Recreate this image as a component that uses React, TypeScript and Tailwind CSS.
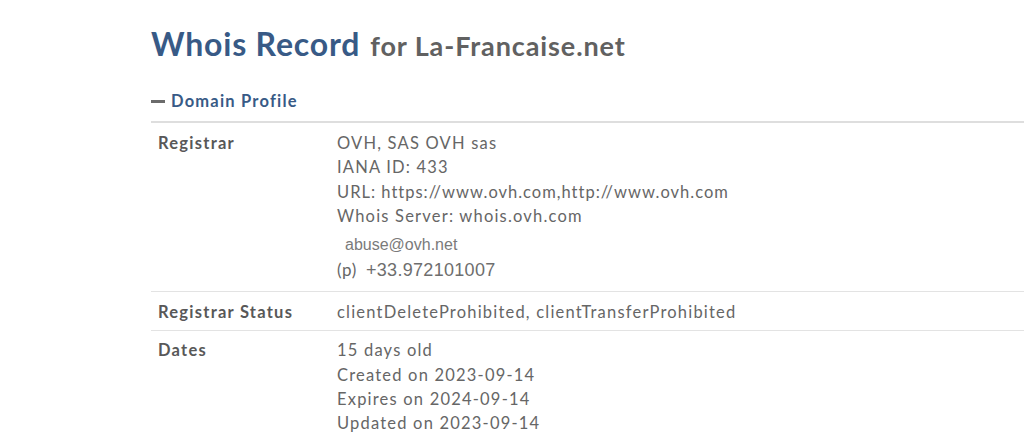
export default function App() {
  const lato = "font-['Lato','Liberation_Sans',sans-serif]";
  const arial = "font-['Liberation_Sans',Arial,sans-serif]";
  return (
    <div className={`min-h-[442px] bg-white pl-[151px] pt-[22px] ${lato}`}>
      {/* Heading */}
      <h1 className="flex items-baseline gap-[10px] leading-[44px]">
        <span className="text-[32px] font-bold text-[#385a86] tracking-[0.8px]">Whois Record</span>
        <span className="text-[27px] font-bold text-[#616161] tracking-[0.9px]">for La-Francaise.net</span>
      </h1>

      {/* Section toggle */}
      <div className="mt-[21px] flex items-center gap-[6px] leading-[24px]">
        <span className="block h-[3px] w-[14px] bg-[#6b6b6b]" />
        <span className="text-[16.5px] font-bold text-[#385a86] tracking-[1.2px]">Domain Profile</span>
      </div>

      {/* Profile table */}
      <div className="mt-[8px] border-t-2 border-[#dedede] text-[16.5px] leading-[24.3px] tracking-[1.2px]">
        <div className="grid grid-cols-[186px_1fr] border-b border-[#e3e3e3] pt-[8px] pb-[8px]">
          <div className="pl-[7px] font-bold text-[#585858] tracking-[1.25px]">Registrar</div>
          <div className="text-[#666]">
            <div>OVH, SAS OVH sas</div>
            <div>IANA ID: 433</div>
            <div className="tracking-[1px]">URL: https://www.ovh.com,http://www.ovh.com</div>
            <div>Whois Server: whois.ovh.com</div>
            <div className={`mt-[5px] pl-[8px] text-[16px] leading-[24px] tracking-normal text-[#7a7a7a] ${arial}`}>
              abuse@ovh.net
            </div>
            <div className="flex items-baseline leading-[26px]">
              <span className="w-[29px] text-[17px] tracking-[0.6px]">(p)</span>
              <span className={`text-[18px] tracking-[0.3px] text-[#6e6e6e] ${arial}`}>+33.972101007</span>
            </div>
          </div>
        </div>

        <div className="grid grid-cols-[186px_1fr] border-b border-[#e3e3e3] pt-[8px] pb-[6px]">
          <div className="pl-[7px] font-bold text-[#585858] tracking-[1.25px]">Registrar Status</div>
          <div className="text-[#666]">clientDeleteProhibited, clientTransferProhibited</div>
        </div>

        <div className="grid grid-cols-[186px_1fr] pt-[7px] pb-[8px]">
          <div className="pl-[7px] font-bold text-[#585858] tracking-[1.25px]">Dates</div>
          <div className="text-[#666]">
            <div>15 days old</div>
            <div>Created on 2023-09-14</div>
            <div>Expires on 2024-09-14</div>
            <div>Updated on 2023-09-14</div>
          </div>
        </div>
      </div>
    </div>
  );
}
